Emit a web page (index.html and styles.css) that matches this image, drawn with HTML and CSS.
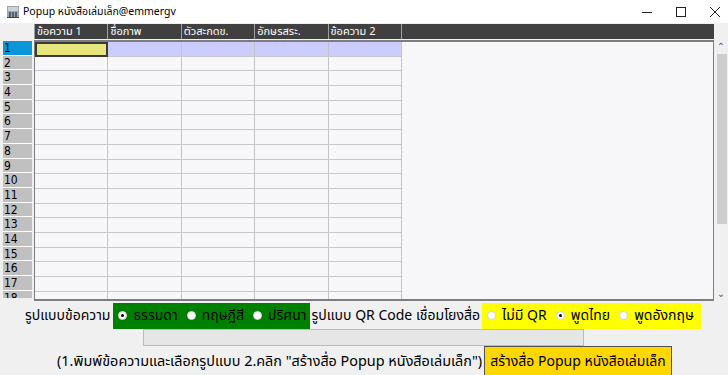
FILE: index.html
```html
<!DOCTYPE html>
<html lang="th">
<head>
<meta charset="utf-8">
<title>Popup หนังสือเล่มเล็ก@emmergv</title>
<link rel="stylesheet" href="styles.css">
</head>
<body>
<div class="window">
  <div class="titlebar">
    <svg class="appicon" width="12" height="12" viewBox="0 0 12 12">
      <rect x="0" y="0" width="12" height="12" fill="#9aa6b2"/>
      <rect x="1" y="1" width="10" height="4" fill="#c9d3dc"/>
      <rect x="2" y="6" width="2" height="5" fill="#55626f"/>
      <rect x="5" y="6" width="2" height="5" fill="#55626f"/>
      <rect x="8" y="6" width="2" height="5" fill="#55626f"/>
      <rect x="0" y="11" width="12" height="1" fill="#3c4650"/>
    </svg>
    <span class="title">Popup หนังสือเล่มเล็ก@emmergv</span>
    <div class="winctl">
      <svg width="12" height="12" viewBox="0 0 12 12"><path d="M1 6.5h10" stroke="#222" stroke-width="1"/></svg>
      <svg width="12" height="12" viewBox="0 0 12 12"><rect x="1.5" y="1.5" width="9" height="9" fill="none" stroke="#222" stroke-width="1"/></svg>
      <svg width="12" height="12" viewBox="0 0 12 12"><path d="M1 1L11 11M11 1L1 11" stroke="#222" stroke-width="1"/></svg>
    </div>
  </div>

  <div class="sheet">
    <div class="corner"></div>
    <div class="colhead">
      <div class="hcell">ข้อความ 1</div>
      <div class="hcell">ชื่อภาพ</div>
      <div class="hcell">ตัวสะกดข.</div>
      <div class="hcell">อักษรสระ.</div>
      <div class="hcell">ข้อความ 2</div>
      <div class="hrest"></div>
    </div>
    <div class="vscrolltop"></div>

    <div class="rowhead">
      <div class="rh sel">1</div>
      <div class="rh">2</div>
      <div class="rh">3</div>
      <div class="rh">4</div>
      <div class="rh">5</div>
      <div class="rh">6</div>
      <div class="rh">7</div>
      <div class="rh">8</div>
      <div class="rh">9</div>
      <div class="rh">10</div>
      <div class="rh">11</div>
      <div class="rh">12</div>
      <div class="rh">13</div>
      <div class="rh">14</div>
      <div class="rh">15</div>
      <div class="rh">16</div>
      <div class="rh">17</div>
      <div class="rh">18</div>
    </div>

    <div class="body">
      <div class="cells" id="cells"></div>
    </div>

    <div class="vscroll">
      <span class="arr up">&#8963;</span>
      <div class="thumb"></div>
      <span class="arr down">&#8964;</span>
    </div>
  </div>

  <div class="controls">
    <div class="line1">
      <span class="lbl lbl1">รูปแบบข้อความ</span>
      <div class="opts green">
        <span class="opt"><i class="radio on"></i>ธรรมดา</span>
        <span class="opt"><i class="radio"></i>ทฤษฎีสี</span>
        <span class="opt"><i class="radio"></i>ปริศนา</span>
      </div>
      <span class="lbl">รูปแบบ QR Code เชื่อมโยงสื่อ</span>
      <div class="opts yellow">
        <span class="opt"><i class="radio"></i>ไม่มี QR</span>
        <span class="opt"><i class="radio on"></i>พูดไทย</span>
        <span class="opt"><i class="radio"></i>พูดอังกฤษ</span>
      </div>
    </div>
    <div class="line2"><div class="progress"></div></div>
    <div class="line3">
      <span class="hint">(1.พิมพ์ข้อความและเลือกรูปแบบ 2.คลิก "สร้างสื่อ Popup หนังสือเล่มเล็ก")</span>
      <button class="make">สร้างสื่อ Popup หนังสือเล่มเล็ก</button>
    </div>
  </div>
</div>
<script>
  var c = document.getElementById('cells');
  var html = '';
  for (var r = 0; r < 18; r++) {
    for (var k = 0; k < 5; k++) {
      var cls = 'cell';
      if (r === 0) cls += (k === 0 ? ' cur' : ' selrow');
      html += '<div class="' + cls + '"></div>';
    }
  }
  c.innerHTML = html;
</script>
</body>
</html>
```
FILE: styles.css
```css
* { box-sizing: border-box; }
html, body { margin: 0; padding: 0; }
body {
  width: 728px;
  height: 375px;
  overflow: hidden;
  background: #f0f0f0;
  font-family: Tahoma, "Noto Sans Thai", "Noto Sans", "DejaVu Sans", sans-serif;
  color: #000;
}
.window { width: 728px; height: 375px; display: flex; flex-direction: column; }

.titlebar {
  height: 23px;
  background: #fff;
  display: flex;
  align-items: center;
  padding-left: 7px;
  flex: none;
}
.appicon { flex: none; }
.title { font-size: 10.5px; margin-left: 4px; color: #000; white-space: nowrap; }
.winctl { margin-left: auto; display: flex; gap: 22px; padding-right: 7px; }

.sheet {
  display: grid;
  grid-template-columns: 34px 680px 14px;
  grid-template-rows: 16px 261px;
  padding-top: 1px;
  flex: none;
}
.corner { background: #f0f0f0; }
.colhead {
  background: #404040;
  display: flex;
  height: 15px;
  border-left: 1px solid #a0a0a0;
}
.hcell {
  width: 73.4px;
  flex: none;
  color: #fff;
  font-size: 11px;
  line-height: 15px;
  padding-left: 2px;
  border-right: 1px solid #a0a0a0;
  white-space: nowrap;
  overflow: hidden;
}
.hrest { flex: 1; }
.vscrolltop { background: #f0f0f0; }

.rowhead {
  padding: 1px 0 0 3px;
  height: 258px;
  overflow: hidden;
  display: flex;
  flex-direction: column;
}
.rh {
  height: 14.7px;
  flex: none;
  width: 29px;
  background: #c0c0c0;
  border-bottom: 1px solid #fff;
  font-family: "DejaVu Sans Condensed", "DejaVu Sans", sans-serif;
  font-size: 12px;
  line-height: 14px;
  padding-left: 1px;
  overflow: hidden;
}
.rh.sel { background: #0a95d6; }

.body {
  background: #f7f7f9;
  border: 2px solid #7d7d7d;
  border-right-width: 1px;
  border-left-width: 1px;
  overflow: hidden;
}
.cells {
  display: grid;
  grid-template-columns: repeat(5, 73.4px);
  grid-auto-rows: 14.7px;
  width: 367px;
}
.cell {
  border-right: 1px solid #c4c4c4;
  border-bottom: 1px solid #c8c8c8;
  background: #f7f7f9;
}
.cell.selrow { background: #ccccff; }
.cell.cur {
  background: #e6e67c;
  border: 2px solid #3a3a3a;
}

.vscroll {
  background: #f0f0f0;
  display: flex;
  flex-direction: column;
  align-items: center;
}
.arr { font-size: 10px; color: #606060; line-height: 10px; height: 14px; display: flex; align-items: center; }
.thumb { width: 10px; height: 170px; background: #cdcdcd; margin-left: 2px; }
.arr.down { margin-top: auto; height: 14px; }

.controls { display: flex; flex-direction: column; flex: none; }
.line1 {
  display: flex;
  align-items: center;
  height: 27px;
  margin-top: 1px;
  padding-left: 25px;
}
.lbl { font-size: 14px; white-space: nowrap; }
.lbl1 { margin-right: 3px; }
.opts {
  display: flex;
  align-items: center;
  height: 26px;
  padding: 0 3px 0 5px;
  gap: 9px;
}
.opts.green { background: #008000; width: 197px; margin-right: 1px; }
.opts.yellow { background: #ffff00; width: 219px; margin-left: 2px; }
.opt { display: flex; align-items: center; font-size: 14px; white-space: nowrap; }
.radio {
  display: inline-block;
  width: 9px;
  height: 9px;
  border-radius: 50%;
  background: #fff;
  border: 1px solid #d0d0d0;
  margin-right: 6px;
  position: relative;
}
.radio.on::after {
  content: "";
  position: absolute;
  left: 2px; top: 2px;
  width: 3px; height: 3px;
  border-radius: 50%;
  background: #000;
}

.line2 { height: 17px; padding-left: 143px; }
.progress { width: 441px; height: 17px; background: #e6e6e6; border: 1px solid #bcbcbc; }

.line3 { display: flex; align-items: center; height: 30px; padding-left: 57px; }
.hint { font-size: 14.4px; white-space: nowrap; width: 427px; }
.make {
  font-family: inherit;
  font-size: 14px;
  background: #ffd700;
  border: 1px solid #505050;
  height: 30px;
  width: 188px;
  padding: 0;
  color: #000;
  white-space: nowrap;
}
```
